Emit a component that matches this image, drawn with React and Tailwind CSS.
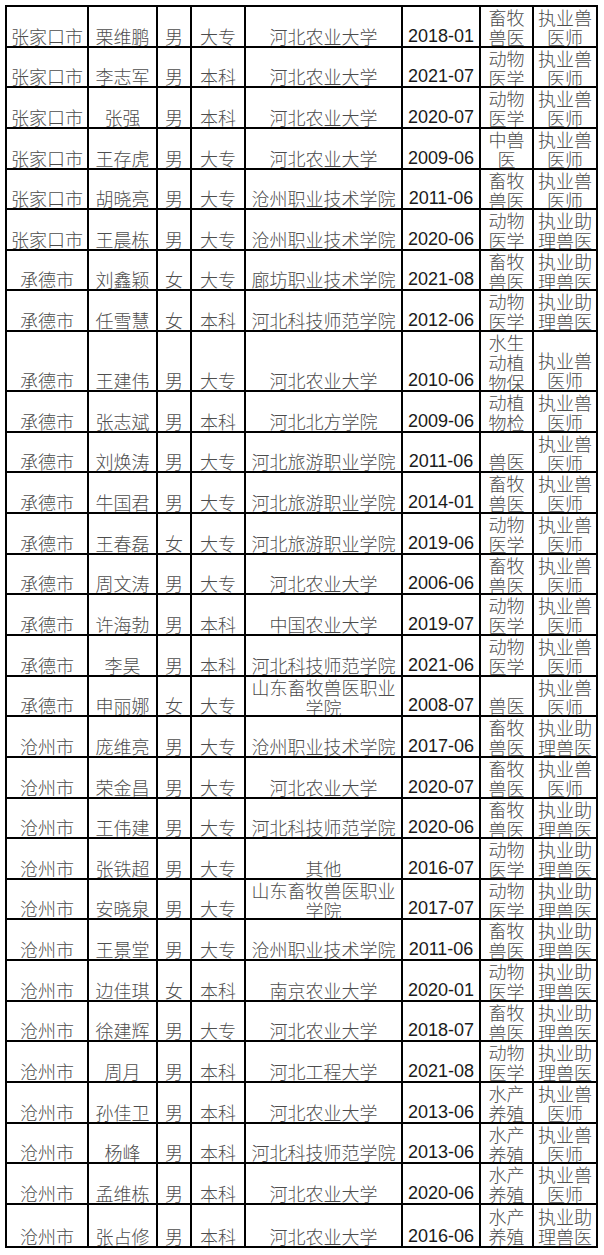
const rows = [
  ["张家口市", "栗维鹏", "男", "大专", "河北农业大学", "2018-01", "畜牧兽医", "执业兽医师"],
  ["张家口市", "李志军", "男", "本科", "河北农业大学", "2021-07", "动物医学", "执业兽医师"],
  ["张家口市", "张强", "男", "本科", "河北农业大学", "2020-07", "动物医学", "执业兽医师"],
  ["张家口市", "王存虎", "男", "大专", "河北农业大学", "2009-06", "中兽医", "执业兽医师"],
  ["张家口市", "胡晓亮", "男", "大专", "沧州职业技术学院", "2011-06", "畜牧兽医", "执业兽医师"],
  ["张家口市", "王晨栋", "男", "大专", "沧州职业技术学院", "2020-06", "动物医学", "执业助理兽医"],
  ["承德市", "刘鑫颖", "女", "大专", "廊坊职业技术学院", "2021-08", "畜牧兽医", "执业助理兽医"],
  ["承德市", "任雪慧", "女", "本科", "河北科技师范学院", "2012-06", "动物医学", "执业助理兽医"],
  ["承德市", "王建伟", "男", "大专", "河北农业大学", "2010-06", "水生动植物保护", "执业兽医师", true],
  ["承德市", "张志斌", "男", "本科", "河北北方学院", "2009-06", "动植物检疫", "执业兽医师"],
  ["承德市", "刘焕涛", "男", "大专", "河北旅游职业学院", "2011-06", "兽医", "执业兽医师"],
  ["承德市", "牛国君", "男", "大专", "河北旅游职业学院", "2014-01", "畜牧兽医", "执业兽医师"],
  ["承德市", "王春磊", "女", "大专", "河北旅游职业学院", "2019-06", "动物医学", "执业兽医师"],
  ["承德市", "周文涛", "男", "大专", "河北农业大学", "2006-06", "畜牧兽医", "执业兽医师"],
  ["承德市", "许海勃", "男", "本科", "中国农业大学", "2019-07", "动物医学", "执业兽医师"],
  ["承德市", "李昊", "男", "本科", "河北科技师范学院", "2021-06", "动物医学", "执业兽医师"],
  ["承德市", "申丽娜", "女", "大专", "山东畜牧兽医职业学院", "2008-07", "兽医", "执业兽医师"],
  ["沧州市", "庞维亮", "男", "大专", "沧州职业技术学院", "2017-06", "畜牧兽医", "执业助理兽医"],
  ["沧州市", "荣金昌", "男", "大专", "河北农业大学", "2020-07", "畜牧兽医", "执业兽医师"],
  ["沧州市", "王伟建", "男", "大专", "河北科技师范学院", "2020-06", "畜牧兽医", "执业助理兽医"],
  ["沧州市", "张铁超", "男", "大专", "其他", "2016-07", "动物医学", "执业助理兽医"],
  ["沧州市", "安晓泉", "男", "大专", "山东畜牧兽医职业学院", "2017-07", "动物医学", "执业助理兽医"],
  ["沧州市", "王景堂", "男", "大专", "沧州职业技术学院", "2011-06", "畜牧兽医", "执业助理兽医"],
  ["沧州市", "边佳琪", "女", "本科", "南京农业大学", "2020-01", "动物医学", "执业助理兽医"],
  ["沧州市", "徐建辉", "男", "大专", "河北农业大学", "2018-07", "畜牧兽医", "执业助理兽医"],
  ["沧州市", "周月", "男", "本科", "河北工程大学", "2021-08", "动物医学", "执业助理兽医"],
  ["沧州市", "孙佳卫", "男", "本科", "河北农业大学", "2013-06", "水产养殖", "执业兽医师"],
  ["沧州市", "杨峰", "男", "本科", "河北科技师范学院", "2013-06", "水产养殖", "执业兽医师"],
  ["沧州市", "孟维栋", "男", "本科", "河北农业大学", "2020-06", "水产养殖", "执业兽医师"],
  ["沧州市", "张占修", "男", "本科", "河北农业大学", "2016-06", "水产养殖", "执业助理兽医"],
];

// excel-ish cell: bottom aligned, falls back to top when the wrapped text overflows
function Cell({ children, last, num }) {
  return (
    <div
      className={
        "flex flex-col [justify-content:safe_flex-end] overflow-hidden text-center leading-[20px] " +
        (last ? "" : "border-r-2 border-black ") +
        (num
          ? "text-[18px] text-[#1a1a1a] font-['Liberation_Sans',Arial,sans-serif]"
          : "text-[18px] font-light text-[#4d4d4d] font-['Noto_Sans_CJK_SC','Noto_Sans',sans-serif]")
      }
    >
      <div>{children}</div>
    </div>
  );
}

export default function App() {
  return (
    <div className="bg-white w-[604px] h-[1255px] pt-[5px] pl-[5px]">
      <div className="w-[593px] border-2 border-black">
        {rows.map((r, i) => (
          <div
            key={i}
            className={
              "grid grid-cols-[82px_69px_34px_54px_157px_78px_53px_62px] " +
              (r[8] ? "h-[60px] " : "h-[40.65px] ") +
              (i === rows.length - 1 ? "" : "border-b-2 border-black")
            }
          >
            <Cell>{r[0]}</Cell>
            <Cell>{r[1]}</Cell>
            <Cell>{r[2]}</Cell>
            <Cell>{r[3]}</Cell>
            <Cell>{r[4]}</Cell>
            <Cell num>{r[5]}</Cell>
            <Cell>{r[6]}</Cell>
            <Cell last>{r[7]}</Cell>
          </div>
        ))}
      </div>
    </div>
  );
}
